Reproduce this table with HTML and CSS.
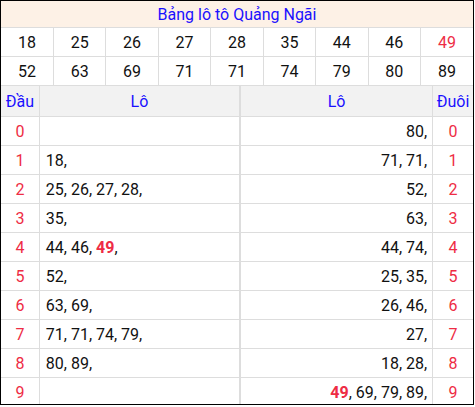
FILE: index.html
```html
<!DOCTYPE html>
<html>
<head>
<meta charset="utf-8">
<link rel="stylesheet" href="styles.css">
</head>
<body>
<div class="box">
  <table class="top">
    <tr><th colspan="9" class="title">Bảng lô tô Quảng Ngãi</th></tr>
    <tr><td>18</td><td>25</td><td>26</td><td>27</td><td>28</td><td>35</td><td>44</td><td>46</td><td class="red">49</td></tr>
    <tr><td>52</td><td>63</td><td>69</td><td>71</td><td>71</td><td>74</td><td>79</td><td>80</td><td>89</td></tr>
  </table>
  <table class="lt">
    <colgroup><col class="c1"><col class="c2"><col class="c3"><col class="c4"></colgroup>
    <tr class="hd"><th>Đầu</th><th class="mid">Lô</th><th>Lô</th><th>Đuôi</th></tr>
    <tr><td class="n">0</td><td class="l mid"></td><td class="r">80,</td><td class="n">0</td></tr>
    <tr><td class="n">1</td><td class="l mid">18,</td><td class="r">71, 71,</td><td class="n">1</td></tr>
    <tr><td class="n">2</td><td class="l mid">25, 26, 27, 28,</td><td class="r">52,</td><td class="n">2</td></tr>
    <tr><td class="n">3</td><td class="l mid">35,</td><td class="r">63,</td><td class="n">3</td></tr>
    <tr><td class="n">4</td><td class="l mid">44, 46, <b class="red">49</b>,</td><td class="r">44, 74,</td><td class="n">4</td></tr>
    <tr><td class="n">5</td><td class="l mid">52,</td><td class="r">25, 35,</td><td class="n">5</td></tr>
    <tr><td class="n">6</td><td class="l mid">63, 69,</td><td class="r">26, 46,</td><td class="n">6</td></tr>
    <tr><td class="n">7</td><td class="l mid">71, 71, 74, 79,</td><td class="r">27,</td><td class="n">7</td></tr>
    <tr><td class="n">8</td><td class="l mid">80, 89,</td><td class="r">18, 28,</td><td class="n">8</td></tr>
    <tr><td class="n">9</td><td class="l mid"></td><td class="r"><b class="red">49</b>, 69, 79, 89,</td><td class="n">9</td></tr>
  </table>
</div>
</body>
</html>
```
FILE: styles.css
```css
html, body { margin: 0; padding: 0; background: #fff; }
body { font-family: Roboto, "Liberation Sans", sans-serif; font-size: 16px; color: #111; }
.box { width: 472px; height: 403px; overflow: hidden; border: 1px solid #000; }
table { border-collapse: collapse; width: 100%; table-layout: fixed; }
.top td, .top th { border: 1px solid #ddd; text-align: center; padding: 0; }
.top tr:first-child th { border-top: none; }
.top td:first-child, .top th:first-child { border-left: none; }
.top td:last-child, .top th:last-child { border-right: none; }
.title { background: #fdf1e6; color: #1a10ff; font-weight: normal; height: 26px; }
.top td { height: 28px; }
.lt td, .lt th { border: 1px solid #ddd; padding: 0; height: 28px; }
.lt tr:first-child th { border-top: none; }
.lt td:first-child, .lt th:first-child { border-left: none; }
.lt td:last-child, .lt th:last-child { border-right: none; }
.lt .mid { border-right: 2px solid #ddd; }
.c1 { width: 38px; }
.c2 { width: 199px; }
.c3 { width: 191px; }
.c4 { width: 40px; }
.hd th { background: #f2f2f2; color: #1a10ff; font-weight: normal; height: 30px; text-align: center; }
.n { text-align: center; color: #ee2c44; }
.l { text-align: left; padding-left: 6px !important; }
.r { text-align: right; padding-right: 5px !important; }
.red { color: #ee2c44; }
b.red { font-weight: bold; }
```
